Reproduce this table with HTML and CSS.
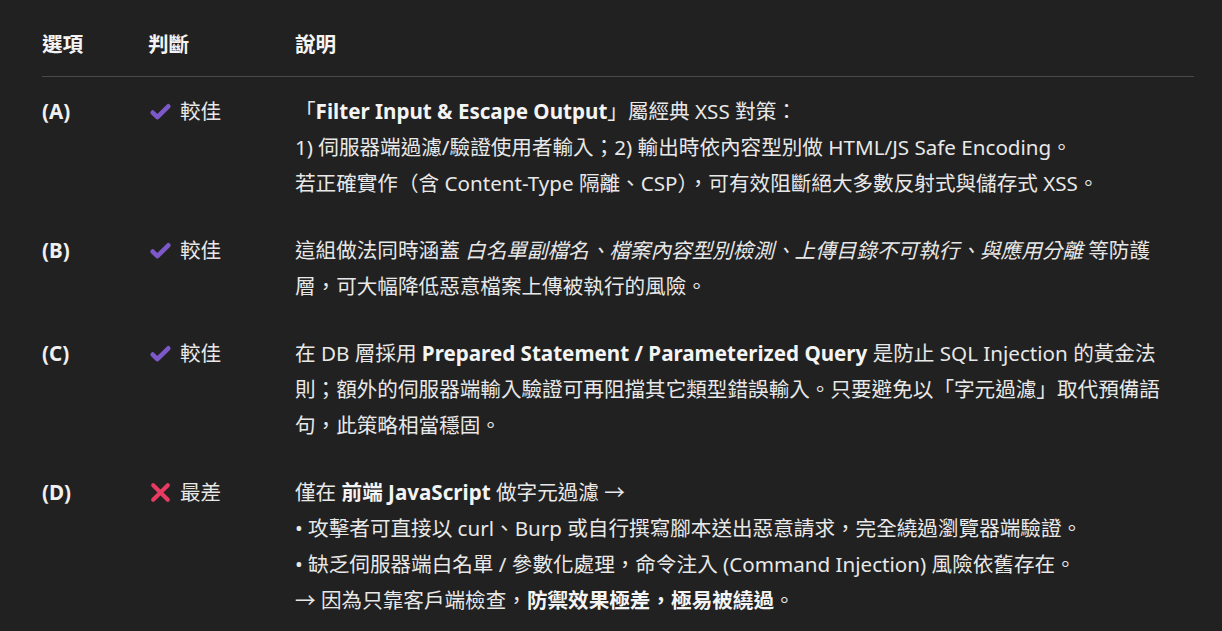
FILE: index.html
```html
<!DOCTYPE html>
<html lang="zh-Hant">
<head>
<meta charset="utf-8">
<link rel="stylesheet" href="styles.css">
</head>
<body>
<div class="table">
  <div class="row head">
    <div class="c1">選項</div>
    <div class="c2">判斷</div>
    <div class="c3">說明</div>
  </div>
  <div class="row">
    <div class="c1 opt">(A)</div>
    <div class="c2"><span class="verdict"><svg class="ic" viewBox="0 0 24 24"><path d="M4.5 13l4.5 4.5L19.5 7" fill="none" stroke="#7c58c8" stroke-width="4.4" stroke-linecap="round" stroke-linejoin="round"/></svg>較佳</span></div>
    <div class="c3">「<b>Filter Input &amp; Escape Output</b>」屬經典 XSS 對策：<br>1) 伺服器端過濾/驗證使用者輸入；2) 輸出時依內容型別做 HTML/JS Safe Encoding。<br>若正確實作（含 Content-Type 隔離、CSP），可有效阻斷絕大多數反射式與儲存式 XSS。</div>
  </div>
  <div class="row">
    <div class="c1 opt">(B)</div>
    <div class="c2"><span class="verdict"><svg class="ic" viewBox="0 0 24 24"><path d="M4.5 13l4.5 4.5L19.5 7" fill="none" stroke="#7c58c8" stroke-width="4.4" stroke-linecap="round" stroke-linejoin="round"/></svg>較佳</span></div>
    <div class="c3">這組做法同時涵蓋 <i>白名單副檔名、檔案內容型別檢測、上傳目錄不可執行、與應用分離</i> 等防護<br>層，可大幅降低惡意檔案上傳被執行的風險。</div>
  </div>
  <div class="row">
    <div class="c1 opt">(C)</div>
    <div class="c2"><span class="verdict"><svg class="ic" viewBox="0 0 24 24"><path d="M4.5 13l4.5 4.5L19.5 7" fill="none" stroke="#7c58c8" stroke-width="4.4" stroke-linecap="round" stroke-linejoin="round"/></svg>較佳</span></div>
    <div class="c3">在 DB 層採用 <b>Prepared Statement / Parameterized Query</b> 是防止 SQL Injection 的黃金法<br>則；額外的伺服器端輸入驗證可再阻擋其它類型錯誤輸入。只要避免以「字元過濾」取代預備語<br>句，此策略相當穩固。</div>
  </div>
  <div class="row">
    <div class="c1 opt">(D)</div>
    <div class="c2"><span class="verdict"><svg class="ic" viewBox="0 0 24 24"><path d="M5 5L19 19M19 5L5 19" fill="none" stroke="#e93a62" stroke-width="4" stroke-linecap="round"/></svg>最差</span></div>
    <div class="c3">僅在 <b>前端 JavaScript</b> 做字元過濾 →<br>• 攻擊者可直接以 curl、Burp 或自行撰寫腳本送出惡意請求，完全繞過瀏覽器端驗證。<br>• 缺乏伺服器端白名單 / 參數化處理，命令注入 (Command Injection) 風險依舊存在。<br>→ 因為只靠客戶端檢查，<b>防禦效果極差，極易被繞過</b>。</div>
  </div>
</div>
</body>
</html>
```

FILE: styles.css
```css
html, body {
  margin: 0;
  background: #212121;
}
body {
  font-family: "Segoe UI", "Noto Sans", "Noto Sans CJK TC", sans-serif;
  font-size: 20.6px;
  line-height: 36px;
  color: #e8e8e8;
  padding: 26px 28px 0 42px;
}
.table {
  display: flex;
  flex-direction: column;
}
.row {
  display: grid;
  grid-template-columns: 106px 147px 1fr;
  padding: 16px 0 15px;
}
.row.head {
  padding: 0 0 14px;
  border-bottom: 1px solid #4a4a4a;
  font-weight: 700;
  color: #f4f4f4;
}
.opt {
  font-weight: 700;
  color: #f0f0f0;
}
.c3 {
  white-space: nowrap;
}
.c3 b {
  font-weight: 700;
  color: #f4f4f4;
}
.verdict {
  display: inline-flex;
  align-items: center;
  gap: 7px;
}
.ic {
  width: 25px;
  height: 25px;
}
```
